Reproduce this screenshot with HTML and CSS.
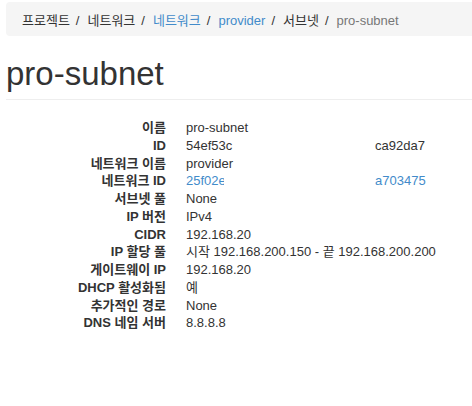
FILE: index.html
```html
<!DOCTYPE html>
<html lang="ko">
  <head>
    <meta charset="UTF-8" />
    <title>pro-subnet</title>
    <link rel="stylesheet" href="styles.css">
  </head>
  <body>
    <div class="page">
      <ol class="breadcrumb">
        <li>프로젝트</li>
        <li>네트워크</li>
        <li><a href="#">네트워크</a></li>
        <li><a href="#">provider</a></li>
        <li>서브넷</li>
        <li class="active">pro-subnet</li>
      </ol>

      <div class="page-header">
        <h1>pro-subnet</h1>
      </div>

      <dl class="dl-horizontal">
        <dt>이름</dt>
        <dd>pro-subnet</dd>
        <dt>ID</dt>
        <dd><span class="clip clip-id">54ef53c</span><span class="tail">ca92da7</span></dd>
        <dt>네트워크 이름</dt>
        <dd>provider</dd>
        <dt>네트워크 ID</dt>
        <dd><a href="#"><span class="clip clip-net">25f02e</span><span class="tail">a703475</span></a></dd>
        <dt>서브넷 풀</dt>
        <dd>None</dd>
        <dt>IP 버전</dt>
        <dd>IPv4</dd>
        <dt>CIDR</dt>
        <dd>192.168.20</dd>
        <dt>IP 할당 풀</dt>
        <dd>시작 192.168.200.150 - 끝 192.168.200.200</dd>
        <dt>게이트웨이 IP</dt>
        <dd>192.168.20</dd>
        <dt>DHCP 활성화됨</dt>
        <dd>예</dd>
        <dt>추가적인 경로</dt>
        <dd>None</dd>
        <dt>DNS 네임 서버</dt>
        <dd>8.8.8.8</dd>
      </dl>
    </div>
  </body>
</html>
```

FILE: styles.css
```css
* {
  box-sizing: border-box;
}

body {
  margin: 0;
  font-family: "Liberation Sans", "Noto Sans CJK KR", sans-serif;
  font-size: 13px;
  color: #333;
  background: #fff;
  overflow: hidden;
}

a {
  color: #428bca;
  text-decoration: none;
}

.page {
  padding: 2px 0 0 6px;
}

/* 상단 경로 */
.breadcrumb {
  display: flex;
  list-style: none;
  margin: 0;
  padding: 10px 16px 6px;
  line-height: 18px;
  background: #f5f5f5;
  border-radius: 4px 0 0 4px;
}

.breadcrumb li + li::before {
  content: "/";
  padding: 0 8px 0 6px;
  color: #333;
}

.breadcrumb .active {
  color: #777;
}

.page-header {
  border-bottom: 1px solid #eee;
  padding-bottom: 5px;
}

.page-header h1 {
  margin: 18px 0 0;
  font-size: 33px;
  font-weight: 400;
  line-height: 40px;
}

/* 서브넷 상세 */
.dl-horizontal {
  display: grid;
  grid-template-columns: 160px 1fr;
  column-gap: 20px;
  margin: 19px 0 0;
  line-height: 17.75px;
}

.dl-horizontal dt {
  font-weight: 700;
  text-align: right;
  white-space: nowrap;
}

.dl-horizontal dd {
  margin: 0;
  white-space: nowrap;
}

.clip {
  display: inline-block;
  overflow: hidden;
  vertical-align: top;
}

.clip-id {
  width: 47px;
}

.clip-net {
  width: 38px;
}

.tail {
  display: inline-block;
  vertical-align: top;
}

dd .clip-id + .tail {
  margin-left: 142px;
}

dd .clip-net + .tail {
  margin-left: 151px;
}
```
